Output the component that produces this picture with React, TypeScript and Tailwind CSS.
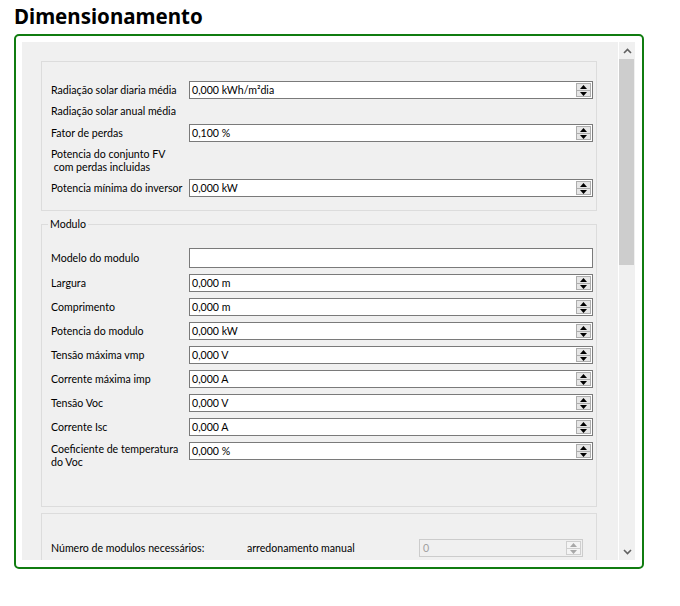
import React from "react";

function Spinner({ disabled = false }: { disabled?: boolean }) {
  const c = disabled ? "#a8a8a8" : "#000000";
  return (
    <div
      className={
        "ml-auto mr-[1px] flex h-[14px] w-[15px] flex-col border " +
        (disabled ? "border-[#cfcfcf] bg-[#f4f4f4]" : "border-[#adadad] bg-[#e6e6e6]")
      }
    >
      <div className="flex h-[6px] items-center justify-center">
        <svg width="7" height="4" viewBox="0 0 7 4">
          <polygon points="3.5,0 7,4 0,4" fill={c} />
        </svg>
      </div>
      <div className={"h-px " + (disabled ? "bg-[#cfcfcf]" : "bg-[#adadad]")} />
      <div className="flex h-[5px] items-center justify-center">
        <svg width="7" height="4" viewBox="0 0 7 4">
          <polygon points="0,0 7,0 3.5,4" fill={c} />
        </svg>
      </div>
    </div>
  );
}

function SpinInput({ value }: { value: string }) {
  return (
    <div className="flex h-[18px] w-[404px] items-center border border-[#7a7a7a] bg-white pl-[2px] text-[10.6px] leading-[14px]">
      <span>{value}</span>
      <Spinner />
    </div>
  );
}

function Row({ label, value }: { label: string; value: string }) {
  return (
    <div className="flex h-[18px] items-center">
      <div className="w-[138px] whitespace-nowrap text-[10.6px] leading-[14px]">{label}</div>
      <SpinInput value={value} />
    </div>
  );
}

export default function App() {
  return (
    <div className="h-[606px] w-[680px] overflow-hidden bg-white text-black font-['Lato',sans-serif]">
      <div className="h-[34px] pl-[14px] pt-[2px] font-['Noto_Sans',sans-serif] text-[20.5px] font-bold leading-[28px]">
        Dimensionamento
      </div>
      <div className="ml-[14px] h-[535px] w-[630px] rounded-[5px] border-2 border-[#107c10] pb-[7px] pl-[6px] pr-[7px] pt-[6px]">
        <div className="flex h-full w-full">
          <div className="flex-1 overflow-hidden bg-[#f0f0f0] pl-[19px] pt-[19px]">
            {/* Group 1 */}
            <div className="h-[150px] w-[556px] border border-[#dcdcdc] pl-[9px] pt-[19px]">
              <Row label="Radiação solar diaria média" value="0,000 kWh/m²dia" />
              <div className="mt-[6px] h-[13px] text-[10.6px] leading-[13px]">Radiação solar anual média</div>
              <div className="mt-[6px]">
                <Row label="Fator de perdas" value="0,100 %" />
              </div>
              <div className="mt-[6px] h-[26px] whitespace-pre text-[10.6px] leading-[13px]">
                {"Potencia do conjunto FV\n com perdas incluidas"}
              </div>
              <div className="mt-[5px]">
                <Row label="Potencia mínima do inversor" value="0,000 kW" />
              </div>
            </div>
            {/* Group 2 */}
            <div className="relative mt-[13px] h-[283px] w-[556px] border border-[#dcdcdc] pl-[9px] pt-[23px]">
              <div className="absolute left-[6px] top-[-8px] bg-[#f0f0f0] px-[2px] text-[10.6px] leading-[14px]">Modulo</div>
              <div className="flex h-[20px] items-center">
                <div className="w-[138px] text-[10.6px] leading-[14px]">Modelo do modulo</div>
                <div className="h-[20px] w-[404px] border border-[#7a7a7a] bg-white" />
              </div>
              <div className="mt-[6px] flex flex-col gap-[6px]">
                <Row label="Largura" value="0,000 m" />
                <Row label="Comprimento" value="0,000 m" />
                <Row label="Potencia do modulo" value="0,000 kW" />
                <Row label="Tensão máxima vmp" value="0,000 V" />
                <Row label="Corrente máxima imp" value="0,000 A" />
                <Row label="Tensão Voc" value="0,000 V" />
                <Row label="Corrente Isc" value="0,000 A" />
                <div className="flex h-[26px] items-start">
                  <div className="w-[138px] pt-px text-[10.6px] leading-[13px]">
                    Coeficiente de temperatura
                    <br />
                    do Voc
                  </div>
                  <SpinInput value="0,000 %" />
                </div>
              </div>
            </div>
            {/* Group 3 */}
            <div className="mt-[6px] h-[100px] w-[556px] border border-[#dcdcdc] pl-[9px] pt-[25px]">
              <div className="flex h-[18px] items-center text-[10.6px] leading-[14px]">
                <div className="w-[196px]">Número de modulos necessários:</div>
                <div className="w-[172px]">arredonamento manual</div>
                <div className="flex h-[18px] w-[164px] items-center border border-[#cccccc] bg-[#f0f0f0] pl-[3px] text-[#a0a0a0]">
                  <span>0</span>
                  <Spinner disabled />
                </div>
              </div>
            </div>
          </div>
          {/* Scrollbar */}
          <div className="flex w-[17px] flex-col border-l border-white bg-[#f0f0f0]">
            <div className="flex h-[17px] items-center justify-center">
              <svg width="9" height="6" viewBox="0 0 9 6">
                <polyline points="1,5 4.5,1.5 8,5" fill="none" stroke="#606060" strokeWidth="1.6" />
              </svg>
            </div>
            <div className="h-[206px] w-[15px] bg-[#cdcdcd]" />
            <div className="flex-1" />
            <div className="flex h-[17px] items-center justify-center">
              <svg width="9" height="6" viewBox="0 0 9 6">
                <polyline points="1,1 4.5,4.5 8,1" fill="none" stroke="#606060" strokeWidth="1.6" />
              </svg>
            </div>
          </div>
        </div>
      </div>
    </div>
  );
}
